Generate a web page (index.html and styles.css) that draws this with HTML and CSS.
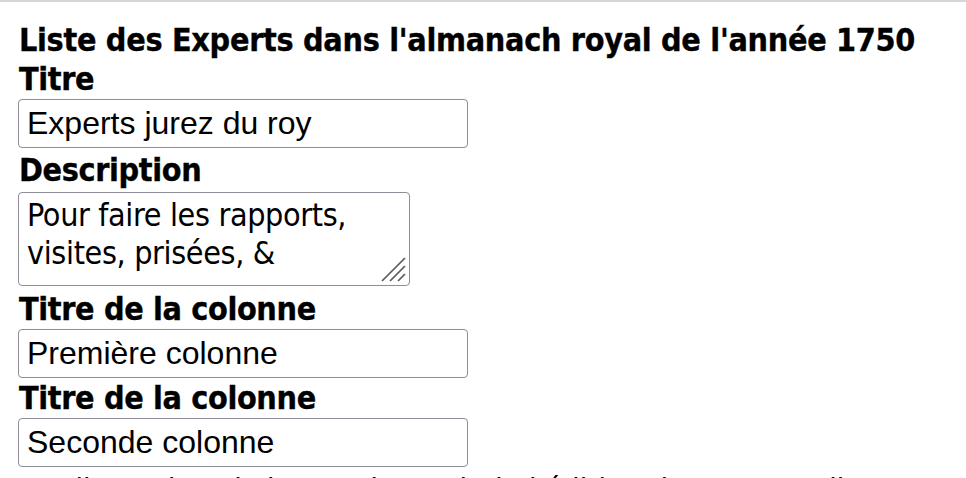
FILE: index.html
```html
<!DOCTYPE html>
<html lang="fr">
<head>
<meta charset="utf-8">
<title>Liste des Experts</title>
<link rel="stylesheet" href="styles.css">
</head>
<body>
<div class="page">
  <h1 class="title">Liste des Experts dans l'almanach royal de l'année 1750</h1>
  <label class="label" for="titre">Titre</label>
  <input class="field field-first" id="titre" type="text" value="Experts jurez du roy">
  <label class="label label-desc" for="desc">Description</label>
  <div class="area-wrap">
    <textarea class="area" id="desc">Pour faire les rapports, visites, prisées, &amp;</textarea>
    <svg class="grip" width="26" height="26" viewBox="0 0 26 26" aria-hidden="true">
      <line x1="25" y1="2" x2="2" y2="25" stroke="#5a5a5a" stroke-width="1.7"/>
      <line x1="25" y1="10" x2="10" y2="25" stroke="#5a5a5a" stroke-width="1.7"/>
      <line x1="25" y1="18" x2="18" y2="25" stroke="#5a5a5a" stroke-width="1.7"/>
    </svg>
  </div>
  <label class="label label-col" for="col1">Titre de la colonne</label>
  <input class="field" id="col1" type="text" value="Première colonne">
  <label class="label" for="col2">Titre de la colonne</label>
  <input class="field" id="col2" type="text" value="Seconde colonne">
  <p class="note">Les listes dans l'almanach royal, de l'édition de Textes et lieux</p>
</div>
</body>
</html>
```
FILE: styles.css
```css
html, body {
  margin: 0;
  padding: 0;
  background: #ffffff;
}
body {
  overflow: hidden;
  height: 478px;
}
.page {
  border-top: 2px solid #d6d6d6;
  padding: 19px 0 0 18px;
  display: flex;
  flex-direction: column;
  align-items: flex-start;
  font-family: "DejaVu Sans Condensed", "DejaVu Sans", sans-serif;
  color: #000;
}
.title {
  margin: 0;
  padding-left: 1px;
  font-size: 32px;
  font-weight: 700;
  line-height: 39px;
  letter-spacing: -0.3px;
  white-space: nowrap;
  -webkit-text-stroke: 0.35px #000;
}
.label {
  display: block;
  padding-left: 1px;
  font-size: 32px;
  font-weight: 700;
  line-height: 39px;
  letter-spacing: -0.35px;
  -webkit-text-stroke: 0.35px #000;
}
.label-desc {
  margin-top: 3px;
}
.label-col {
  margin-top: 4px;
}
.field {
  box-sizing: border-box;
  width: 450px;
  height: 49px;
  margin: 0 0 1px 0;
  padding: 0 8px;
  border: 1px solid #8e8d98;
  border-radius: 4px;
  background: #fff;
  font-family: "Liberation Sans", Arial, sans-serif;
  font-size: 32px;
  color: #000;
  outline: none;
}
.field-first {
  margin-bottom: 0;
}
.area-wrap {
  position: relative;
  margin-top: 2px;
  line-height: 0;
}
.area {
  box-sizing: border-box;
  display: block;
  width: 392px;
  height: 94px;
  margin: 0;
  padding: 3px 8px;
  border: 1px solid #8e8d98;
  border-radius: 4px;
  background: #fff;
  font-family: "DejaVu Sans Condensed", "DejaVu Sans", sans-serif;
  font-size: 32px;
  line-height: 38px;
  letter-spacing: -0.35px;
  color: #000;
  overflow: hidden;
  resize: none;
  outline: none;
}
.grip {
  position: absolute;
  right: 4px;
  bottom: 4px;
}
.note {
  margin: 3px 0 0 0;
  padding-left: 1px;
  font-size: 32px;
  line-height: 39px;
  letter-spacing: -0.3px;
  white-space: nowrap;
}
```
